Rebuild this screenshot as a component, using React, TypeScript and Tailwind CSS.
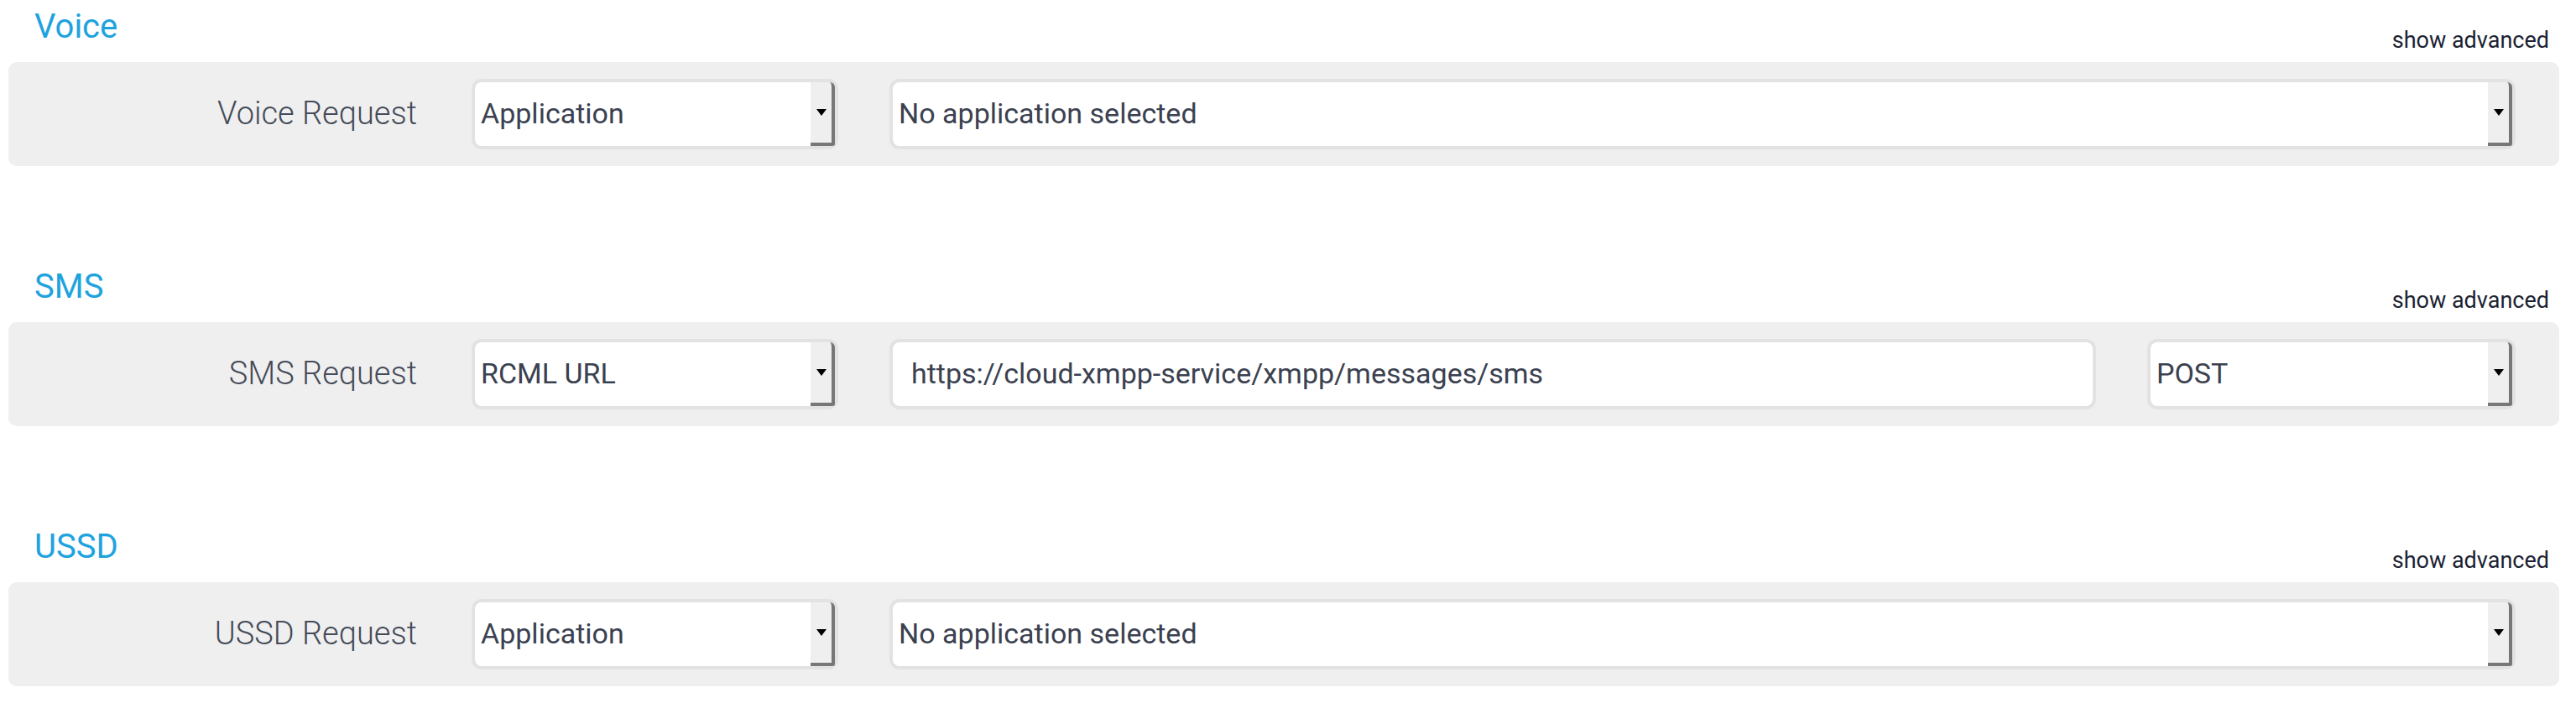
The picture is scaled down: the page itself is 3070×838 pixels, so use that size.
import { ReactNode } from "react";

const font = { fontFamily: "Roboto, 'Liberation Sans', sans-serif" };

function SelectBox({ value, className }: { value: string; className?: string }) {
  return (
    <div
      className={`flex h-[84px] items-stretch rounded-[12px] border-[4px] border-[#e2e2e2] bg-white ${className ?? ""}`}
    >
      <div className="flex flex-1 items-center overflow-hidden rounded-l-[8px] pb-[2px] pl-[7px] text-[34px] text-[#3b4150]">
        {value}
      </div>
      {/* native-looking arrow button */}
      <div className="flex w-[29px] items-center justify-center rounded-tr-[6px] rounded-br-[3px] border-r-[4px] border-b-[4px] border-[#777] bg-[#efefef]">
        <span className="block h-0 w-0 border-x-[6px] border-t-[8px] border-x-transparent border-t-black" />
      </div>
    </div>
  );
}

function TextBox({ value, className }: { value: string; className?: string }) {
  return (
    <div
      className={`flex h-[84px] items-center rounded-[12px] border-[4px] border-[#e2e2e2] bg-white pb-[2px] pl-[22px] text-[34px] text-[#3b4150] ${className ?? ""}`}
    >
      {value}
    </div>
  );
}

function Section({ title, label, children }: { title: string; label: string; children: ReactNode }) {
  return (
    <section className="mb-[112px]">
      <div className="flex h-[74px] items-start justify-between pl-[10px] pr-[20px]">
        <h2 className="mt-[12px] pl-[31px] text-[40px] leading-[40px] text-[#1fa3de]">{title}</h2>
        <span className="mt-[35px] pr-[12px] text-[27px] leading-[27px] text-[#1b2333]">show advanced</span>
      </div>
      <div className="ml-[10px] mr-[20px] flex h-[124px] items-center rounded-[10px] bg-[#efefef] pr-[52px]">
        <div className="w-[489px] pb-[2px] pr-[2px] text-right text-[38px] font-light text-[#454b59]">{label}</div>
        {children}
      </div>
    </section>
  );
}

export default function App() {
  return (
    <div className="min-h-screen w-full bg-white" style={font}>
      <Section title="Voice" label="Voice Request">
        <SelectBox value="Application" className="ml-[63px] w-[437px]" />
        <SelectBox value="No application selected" className="ml-[61px] flex-1" />
      </Section>

      <Section title="SMS" label="SMS Request">
        <SelectBox value="RCML URL" className="ml-[63px] w-[437px]" />
        <TextBox value="https://cloud-xmpp-service/xmpp/messages/sms" className="ml-[61px] flex-1" />
        <SelectBox value="POST" className="ml-[61px] w-[439px]" />
      </Section>

      <Section title="USSD" label="USSD Request">
        <SelectBox value="Application" className="ml-[63px] w-[437px]" />
        <SelectBox value="No application selected" className="ml-[61px] flex-1" />
      </Section>
    </div>
  );
}
